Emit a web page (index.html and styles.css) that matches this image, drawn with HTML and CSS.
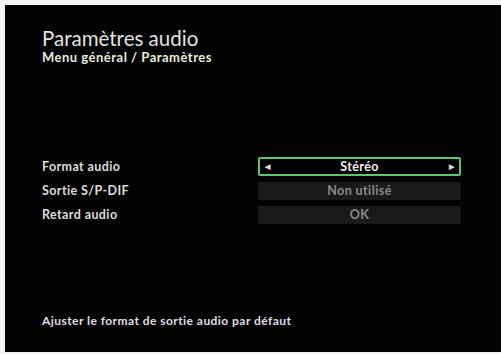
FILE: index.html
```html
<!DOCTYPE html>
<html lang="fr">
<head>
    <meta charset="UTF-8">
    <title>Paramètres audio</title>
    <link rel="stylesheet" href="styles.css">
</head>
<body>
    <div class="screen">
        <div class="header">
            <div class="title">Paramètres audio</div>
            <div class="breadcrumb">Menu général / Paramètres</div>
        </div>
        <div class="settings">
            <div class="row">
                <div class="label">Format audio</div>
                <div class="value selected">
                    <span class="arrow">&#9664;</span>
                    <span class="value-text">Stéréo</span>
                    <span class="arrow">&#9654;</span>
                </div>
            </div>
            <div class="row">
                <div class="label">Sortie S/P-DIF</div>
                <div class="value"><span class="value-text">Non utilisé</span></div>
            </div>
            <div class="row">
                <div class="label">Retard audio</div>
                <div class="value"><span class="value-text">OK</span></div>
            </div>
        </div>
        <div class="help">Ajuster le format de sortie audio par défaut</div>
    </div>
</body>
</html>
```

FILE: styles.css
```css
body {
    margin: 0;
    background-color: #f4f4f4;
    font-family: Lato, sans-serif;
}
.screen {
    margin: 5px 0 0 5px;
    height: 347px;
    background-color: #030303;
    box-sizing: border-box;
    padding: 21px 40px 0 37px;
    display: flex;
    flex-direction: column;
}
.title {
    font-size: 20.5px;
    color: #e2e2e2;
    line-height: 24px;
}
.breadcrumb {
    font-weight: bold;
    font-size: 13px;
    letter-spacing: 0.5px;
    color: #e8ecd8;
    line-height: 15px;
}
.settings {
    margin-top: 92px;
    display: flex;
    flex-direction: column;
    gap: 5px;
}
.row {
    display: flex;
    align-items: center;
    justify-content: space-between;
    height: 19px;
}
.label {
    font-weight: bold;
    font-size: 12.5px;
    letter-spacing: 0.4px;
    color: #dcdcdc;
}
.value {
    width: 203px;
    height: 18px;
    box-sizing: border-box;
    background-color: #1a1a1a;
    display: flex;
    align-items: center;
    justify-content: center;
    font-weight: bold;
    font-size: 12.5px;
    letter-spacing: 0.4px;
    color: #8a8a8a;
}
.value.selected {
    height: 19px;
    background-color: #000;
    border: 2px solid #5fc66a;
    border-radius: 2px;
    justify-content: space-between;
    padding: 0 5px;
    color: #f0f0f0;
}
.arrow {
    font-size: 7px;
    color: #e0e0e0;
}
.help {
    margin-top: auto;
    margin-bottom: 24px;
    font-weight: bold;
    font-size: 12px;
    letter-spacing: 0.45px;
    color: #e0dce8;
}
```
